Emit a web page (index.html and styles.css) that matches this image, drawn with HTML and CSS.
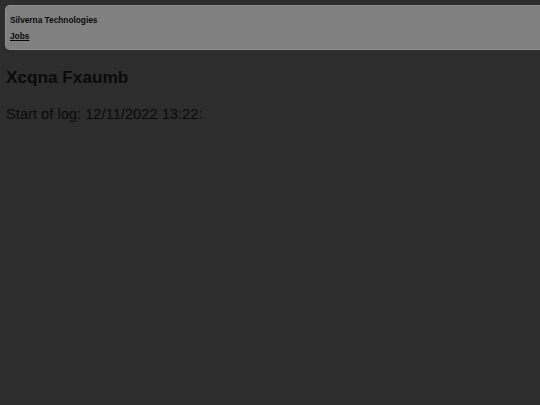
FILE: index.html
```html
<!DOCTYPE html>
<html>
<head>
<meta charset="utf-8">
<link rel="stylesheet" href="styles.css">
</head>
<body>
<header class="topbar">
  <p class="brand">Silverna Technologies</p>
  <p class="nav"><a href="#" class="nav-link">Jobs</a></p>
</header>
<main class="content">
  <h1 class="title">Xcqna Fxaumb</h1>
  <p class="log">Start of log: 12/11/2022 13:22:</p>
</main>
</body>
</html>
```

FILE: styles.css
```css
html, body {
  background: #2d2d2d;
}
body {
  margin: 5px 0 0 5px;
  font-family: "Liberation Sans", Arial, sans-serif;
  color: #0a0a0a;
}
.topbar {
  box-sizing: border-box;
  height: 45px;
  background: #808080;
  border: 1px solid #8e8e8e;
  border-right: none;
  border-radius: 5px 0 0 5px;
  padding: 9.5px 4px 0 4px;
}
.brand, .nav {
  margin: 0;
  font-size: 8.3px;
  font-weight: bold;
  line-height: 9.5px;
}
.nav {
  margin-top: 6.5px;
}
.nav-link {
  color: #0a0a0a;
  text-decoration: underline;
}
.content {
  padding-left: 1px;
}
.title {
  font-size: 17.2px;
  font-weight: bold;
  margin: 18.2px 0 0 0;
  line-height: 19.5px;
}
.log {
  font-size: 14.7px;
  margin: 18.2px 0 0 0;
  line-height: 16.8px;
}
```
